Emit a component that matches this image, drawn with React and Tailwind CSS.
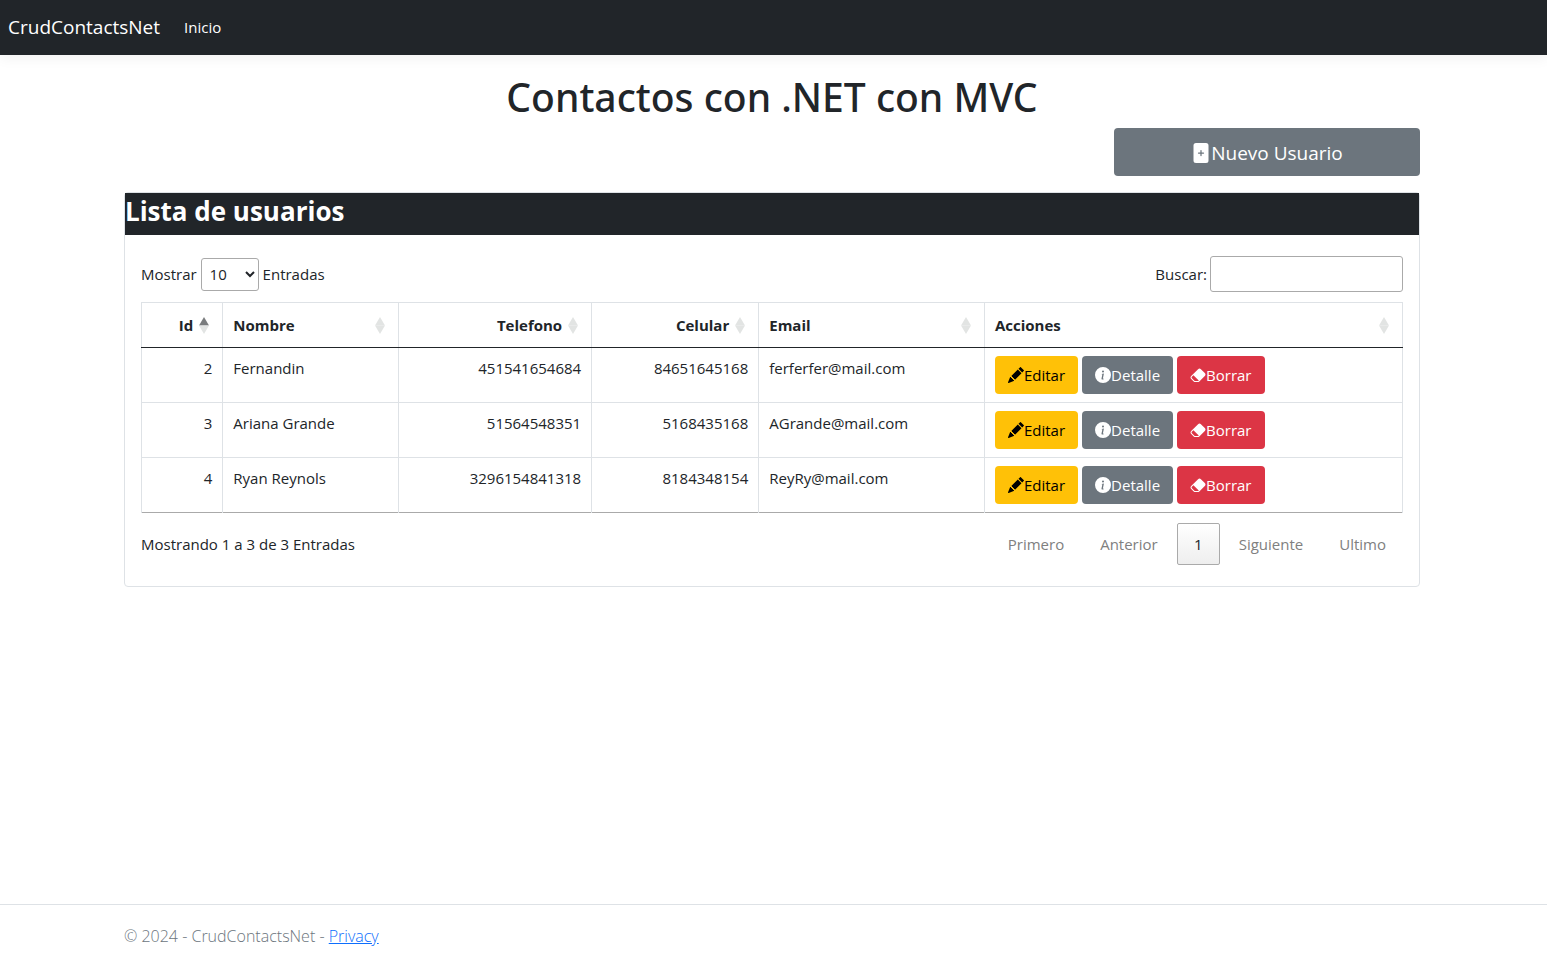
import { BsEraserFill, BsFilePlusFill, BsInfoCircleFill, BsPencilFill } from "react-icons/bs";

const columns = [
  { label: "Id", numeric: true, sorted: true, width: "w-[6.45%]" },
  { label: "Nombre", width: "w-[13.95%]" },
  { label: "Telefono", numeric: true, width: "w-[15.3%]" },
  { label: "Celular", numeric: true, width: "w-[13.25%]" },
  { label: "Email", width: "w-[17.9%]" },
  { label: "Acciones", width: "w-[33.15%]" },
];

const contacts = [
  { id: 2, name: "Fernandin", phone: "451541654684", mobile: "84651645168", email: "ferferfer@mail.com" },
  { id: 3, name: "Ariana Grande", phone: "51564548351", mobile: "5168435168", email: "AGrande@mail.com" },
  { id: 4, name: "Ryan Reynols", phone: "3296154841318", mobile: "8184348154", email: "ReyRy@mail.com" },
];

function SortIcon({ sorted }) {
  return (
    <svg viewBox="0 0 10 18" className="h-[18px] w-[10px] shrink-0" aria-hidden="true">
      <path d="M5 1 L10 9.5 H0 Z" fill={sorted ? "#7a7c7e" : "#e2e4e3"} />
      <path d="M0 9.5 H10 L5 18 Z" fill="#e2e4e3" />
    </svg>
  );
}

function ActionButton({ icon: Icon, label, color }) {
  return (
    <a href="#" className={`inline-flex h-[38px] items-center rounded px-[13px] ${color}`}>
      <Icon className="size-4 shrink-0" aria-hidden="true" />
      {label}
    </a>
  );
}

function PageButton({ children }) {
  return (
    <button type="button" disabled className="h-[42px] px-[17px] text-[#808080]">
      {children}
    </button>
  );
}

export default function App() {
  return (
    <div className="flex min-h-screen flex-col bg-white font-['Open_Sans','Noto_Sans',sans-serif] text-[15px] leading-6 text-[#212529]">
      <header className="shadow-[0_4px_12px_rgba(0,0,0,0.05)]">
        <nav className="flex h-[55px] items-center gap-6 bg-[#212529] px-2 pb-px text-white">
          <a href="#" className="text-[19px]">CrudContactsNet</a>
          <a href="#">Inicio</a>
        </nav>
      </header>

      <main className="flex-1 pr-[3px]">
        <div className="mx-auto max-w-[1320px] px-3 pt-[18px]">
          <h1 className="text-center font-['Noto_Sans','Open_Sans',sans-serif] text-[39px] leading-[48px] font-medium">
            Contactos con .NET con MVC
          </h1>
          <div className="mt-[7px] flex justify-end">
            <a
              href="#"
              className="flex h-12 w-[306px] items-center justify-center rounded bg-[#6c757d] pt-px text-[19px] text-white"
            >
              <BsFilePlusFill className="size-5" aria-hidden="true" />
              Nuevo Usuario
            </a>
          </div>

          <section className="mt-4 rounded border border-[#dee2e6]">
            <h2 className="h-[42px] bg-[#212529] text-[26px] leading-9 font-bold text-white">Lista de usuarios</h2>
            <div className="px-4 pt-[21px] pb-[21px]">
              <div className="flex items-center justify-between">
                <label className="flex items-center gap-1">
                  Mostrar
                  <select className="h-[33px] w-[58px] rounded-[3px] border border-[#aaa] bg-transparent px-1">
                    <option>10</option>
                    <option>25</option>
                    <option>50</option>
                    <option>100</option>
                  </select>
                  Entradas
                </label>
                <label className="flex items-center gap-[3px]">
                  Buscar:
                  <input type="search" className="h-9 w-[193px] rounded-[3px] border border-[#aaa] bg-transparent px-1" />
                </label>
              </div>

              <table className="mt-[10px] w-full table-fixed border-collapse border border-[#dee2e6]">
                <thead>
                  <tr className="h-[45px]">
                    {columns.map((column) => (
                      <th
                        key={column.label}
                        className={`border-x border-b border-x-[#dee2e6] border-b-[#212529] pr-[13px] pl-[10px] font-bold ${column.width}`}
                      >
                        <span
                          className={`flex items-center gap-[6px] ${column.numeric ? "justify-end" : "justify-between"}`}
                        >
                          {column.label}
                          <SortIcon sorted={column.sorted} />
                        </span>
                      </th>
                    ))}
                  </tr>
                </thead>
                <tbody>
                  {contacts.map((contact) => (
                    <tr
                      key={contact.id}
                      className="h-[55px] border-b border-[#dee2e6] align-top last:border-[#aaa] [&>td]:border-x [&>td]:border-[#dee2e6] [&>td]:px-[10px] [&>td]:py-2"
                    >
                      <td className="text-right">{contact.id}</td>
                      <td>{contact.name}</td>
                      <td className="text-right">{contact.phone}</td>
                      <td className="text-right">{contact.mobile}</td>
                      <td>{contact.email}</td>
                      <td>
                        <div className="flex gap-1">
                          <ActionButton icon={BsPencilFill} label="Editar" color="bg-[#ffc107] text-black" />
                          <ActionButton icon={BsInfoCircleFill} label="Detalle" color="bg-[#6c757d] text-white" />
                          <ActionButton icon={BsEraserFill} label="Borrar" color="bg-[#dc3545] text-white" />
                        </div>
                      </td>
                    </tr>
                  ))}
                </tbody>
              </table>

              <div className="mt-[10px] flex items-center justify-between">
                <p>Mostrando 1 a 3 de 3 Entradas</p>
                <div className="flex gap-[2px]">
                  <PageButton>Primero</PageButton>
                  <PageButton>Anterior</PageButton>
                  <button
                    type="button"
                    className="h-[42px] w-[43px] rounded-[2px] border border-[#aaa] bg-linear-to-b from-white to-[#eee]"
                  >
                    1
                  </button>
                  <PageButton>Siguiente</PageButton>
                  <PageButton>Ultimo</PageButton>
                </div>
              </div>
            </div>
          </section>
        </div>
      </main>

      <footer className="border-t border-[#dee2e6] pr-[3px] text-base font-light text-[#6c757d]">
        <div className="mx-auto flex h-[55px] max-w-[1320px] items-center px-3 pt-[6px]">
          <p>
            © 2024 - CrudContactsNet -{" "}
            <a href="#" className="text-[#0d6efd] underline">Privacy</a>
          </p>
        </div>
      </footer>
    </div>
  );
}
